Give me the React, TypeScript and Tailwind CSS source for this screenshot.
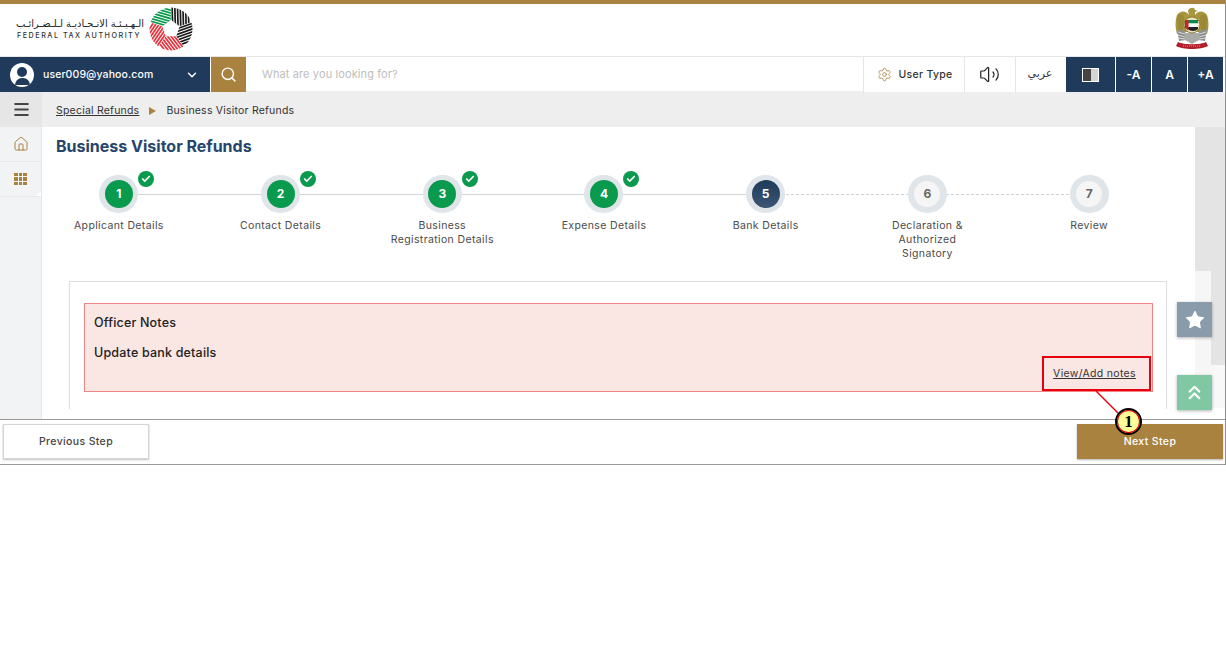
import { ChevronDown, ChevronsUp, Home, Menu, Search, Settings, Star, Volume2, Check } from "lucide-react";

const steps = [
  { n: 1, label: ["Applicant Details"], state: "done" },
  { n: 2, label: ["Contact Details"], state: "done" },
  { n: 3, label: ["Business", "Registration Details"], state: "done" },
  { n: 4, label: ["Expense Details"], state: "done" },
  { n: 5, label: ["Bank Details"], state: "current" },
  { n: 6, label: ["Declaration &", "Authorized", "Signatory"], state: "todo" },
  { n: 7, label: ["Review"], state: "todo" },
];

const wedges = [
  { rot: -36, color: "#0a9a4e" },
  { rot: 36, color: "#1c1c1c" },
  { rot: 108, color: "#1c1c1c" },
  { rot: 180, color: "#e8303a" },
  { rot: 252, color: "#e8303a" },
];

const stripes = [-16, -12.6, -9.2, -5.8, -2.4, 1, 4.4, 7.8, 11.2, 14.6];

function FtaLogo() {
  return (
    <svg width="44" height="44" viewBox="-22 -22 44 44">
      <defs>
        <mask id="ring">
          <circle r="21.5" fill="white" />
          <polygon points="0,-9 8.6,-2.8 5.3,7.3 -5.3,7.3 -8.6,-2.8" fill="black" />
        </mask>
        <clipPath id="wedge">
          <polygon points="0,0 -18,-25 18,-25" />
        </clipPath>
      </defs>
      <g mask="url(#ring)">
        {wedges.map((w) => (
          <g key={w.rot} transform={`rotate(${w.rot})`}>
            <g clipPath="url(#wedge)">
              {stripes.map((s) => (
                <path key={s} d={`M${s - 12} -26 L${s + 8} 0`} stroke={w.color} strokeWidth="1.7" />
              ))}
            </g>
          </g>
        ))}
      </g>
    </svg>
  );
}

function Emblem() {
  return (
    <svg width="34" height="43" viewBox="0 0 34 43" className="mb-[3px]">
      <path d="M13 4 C14 0 20 0 20 3 L23 4 L20 5 L20 8 C24 3 29 4 32 8 C34 14 34 20 32 27 L24 25 L10 25 L2 27 C0 20 0 14 2 8 C5 4 10 3 14 8 Z" fill="#a8963f" />
      <path d="M2 10 C4 7 7 7 9 9 L8 22 L3 24 Z M32 10 C30 7 27 7 25 9 L26 22 L31 24 Z" fill="#9a8a34" />
      <path d="M2 22 L10 24 L11 33 L4 34 Z M32 22 L24 24 L23 33 L30 34 Z" fill="#8d918e" />
      <path d="M3 25 L10 27 M3 28 L10 30 M3 31 L10 32 M31 25 L24 27 M31 28 L24 30 M31 31 L24 32" stroke="#e4e4e4" strokeWidth="0.8" />
      <path d="M10 26 L24 26 L24 33 L17 37 L10 33 Z" fill="#a9aba6" />
      <circle cx="17" cy="18" r="8" fill="#e9e2bb" stroke="#7d6d26" strokeWidth="0.8" />
      <path d="M13 13 H23 V16.5 H13 Z" fill="#0a8a4a" />
      <path d="M13 16.5 H23 V20 H13 Z" fill="#ffffff" />
      <path d="M13 20 H23 V22 C21 24.5 15 24.5 13 22 Z" fill="#222222" />
      <path d="M10 13 H13.5 V23.5 L10 21 Z" fill="#c8202c" />
      <path d="M3 35 C8 38 26 38 31 35 L33 39 C26 43 8 43 1 39 Z" fill="#b01f2a" />
      <path d="M8 39 H26" stroke="#e9c9c0" strokeWidth="0.7" strokeDasharray="1 1" />
    </svg>
  );
}

function Step({ n, label, state }: { n: number; label: string[]; state: string }) {
  const inner =
    state === "done"
      ? "bg-[#0a9a4e] text-white w-[28px] h-[28px]"
      : state === "current"
        ? "bg-gradient-to-b from-[#1f3a5a] to-[#3c5674] text-white w-[28px] h-[28px]"
        : "bg-[#f5f5f6] text-[#666666] w-[26px] h-[26px]";
  return (
    <div className="flex flex-col items-center relative z-10">
      <div className="relative">
        <div className="w-[39px] h-[38px] rounded-full bg-[#e0e5ea] flex items-center justify-center">
          <div className={`rounded-full flex items-center justify-center text-[12px] font-bold ${inner}`}>{n}</div>
        </div>
        {state === "done" && (
          <div className="absolute left-[39px] top-[-4px] w-[16px] h-[16px] rounded-full bg-[#0a9a4e] flex items-center justify-center">
            <Check size={10} strokeWidth={4} className="text-white" />
          </div>
        )}
      </div>
      <div className="mt-[6px] text-center text-[10.5px] leading-[14px] tracking-[0.035em] text-[#4a4a4a]">
        {label.map((l) => (
          <div key={l}>{l}</div>
        ))}
      </div>
    </div>
  );
}

export default function App() {
  return (
    <div className="relative w-[1226px] h-[465px] overflow-hidden bg-white flex flex-col border-r border-[#8f8f8f] font-['Inter',sans-serif]">
      <div className="h-[4px] bg-[#aa823f] shrink-0" />

      <header className="h-[52px] shrink-0 flex items-center justify-between pl-[17px] pr-[16px]">
        <div className="flex items-center gap-[5px] mb-[2px]">
          <div className="w-[127px]">
            <div dir="rtl" className="font-['DejaVu_Sans',sans-serif] text-[9.9px] leading-[13px] text-[#222222] whitespace-nowrap">
              الـهـيـئـة الاتـحـاديـة لـلـضـرائـب
            </div>
            <div className="mt-[1px] text-[7.2px] leading-[10px] font-medium tracking-[0.21em] text-[#333333] whitespace-nowrap">FEDERAL TAX AUTHORITY</div>
          </div>
          <FtaLogo />
        </div>
        <Emblem />
      </header>

      <nav className="h-[36px] shrink-0 flex border-t border-[#e6e6e6] pr-[2px]">
        <div className="w-[210px] bg-[#1f3a5a] flex items-center pl-[10px] pr-[11px] text-white">
          <div className="w-[24px] h-[24px] rounded-full bg-white flex flex-col items-center justify-end overflow-hidden">
            <div className="w-[10px] h-[10px] rounded-full bg-[#1f3a5a] mb-[1px]" />
            <div className="w-[15px] h-[7px] rounded-t-full bg-[#1f3a5a] mb-[2px]" />
          </div>
          <span className="ml-[9px] text-[10.5px] tracking-[0.01em] font-medium flex-1">user009@yahoo.com</span>
          <ChevronDown size={14} strokeWidth={2.5} />
        </div>
        <div className="ml-[1px] w-[35px] bg-[#aa823f] flex items-center justify-center text-white">
          <Search size={17} strokeWidth={2} />
        </div>
        <div className="flex-1 flex items-center pl-[16px] text-[11px] tracking-[0.01em] text-[#bdbdbd] border-b border-[#eeeeee]">What are you looking for?</div>
        <div className="w-[101px] border-l border-[#e6e6e6] pl-[2px] flex items-center justify-center gap-[6px] text-[10.5px] tracking-[0.03em] font-medium text-[#333333]">
          <Settings size={15} strokeWidth={1.3} className="text-[#aa823f]" />
          User Type
        </div>
        <div className="w-[51px] border-l border-[#e6e6e6] pr-[2px] flex items-center justify-center text-[#222222]">
          <Volume2 size={21} strokeWidth={1.4} />
        </div>
        <div className="w-[49px] border-l border-[#e6e6e6] flex items-center justify-center font-['DejaVu_Sans',sans-serif] text-[11px] text-[#333333]">عربي</div>
        <div className="w-[49px] ml-[2px] bg-[#1f3a5a] flex items-center justify-center">
          <div className="w-[17px] h-[14px] bg-white p-[1px] flex">
            <div className="w-1/2 bg-[#444444]" />
            <div className="w-1/2 bg-[#d4d4d4]" />
          </div>
        </div>
        {["-A", "A", "+A"].map((t) => (
          <div key={t} className="w-[35px] ml-[1px] bg-[#1f3a5a] flex items-center justify-center text-white text-[12px] font-semibold">
            {t}
          </div>
        ))}
      </nav>

      <div className="h-[35px] shrink-0 flex bg-[#eeeeee]">
        <div className="w-[42px] bg-[#e6e6e6] flex items-center justify-center text-[#444444]">
          <Menu size={19} strokeWidth={2.4} />
        </div>
        <div className="flex items-center pl-[14px] pt-[2px] text-[10.5px] tracking-[0.02em] text-[#333333]">
          <span className="underline">Special Refunds</span>
          <span className="mx-[10px] w-0 h-0 border-y-[4px] border-y-transparent border-l-[7px] border-l-[#aa823f]" />
          <span>Business Visitor Refunds</span>
        </div>
      </div>

      <main className="flex-1 min-h-0 flex">
        <aside className="w-[42px] shrink-0 bg-[#f1f3f5] border-r border-[#e3e5e8]">
          <div className="h-[35px] flex items-center justify-center border-b border-[#e6e8ea]">
            <Home size={16} strokeWidth={1.5} className="text-[#aa823f]" />
          </div>
          <div className="relative h-[35px] flex items-center justify-center border-b border-[#e6e8ea]">
            <div className="grid grid-cols-3 gap-[1px]">
              {Array.from({ length: 9 }).map((_, i) => (
                <div key={i} className="w-[3.5px] h-[3.5px] bg-[#aa823f]" />
              ))}
            </div>
            <div className="absolute right-0 bottom-0 w-0 h-0 border-l-[5px] border-l-transparent border-b-[5px] border-b-white" />
          </div>
        </aside>

        <section className="w-[1153px] shrink-0 pl-[14px] overflow-hidden">
          <h1 className="mt-[10px] text-[16px] leading-[19px] font-bold text-[#26456b]">Business Visitor Refunds</h1>
          <div className="relative -ml-[18px] mt-[19px] w-[1132px] grid grid-cols-7">
            <div className="absolute left-[81px] top-[19px] w-[647px] border-t border-[#d2d5d8]" />
            <div className="absolute left-[728px] top-[19px] w-[323px] border-t border-dashed border-[#cfd2d5]" />
            {steps.map((s) => (
              <Step key={s.n} n={s.n} label={s.label} state={s.state} />
            ))}
          </div>
          <div className="ml-[13px] mt-[20px] w-[1098px] h-[128px] border border-[#dddddd] border-b-0 pt-[21px] pl-[14px]">
            <div className="w-[1069px] h-[89px] bg-[#fae6e2] border border-[#f08585] pl-[9px] pt-[11px] text-[12.5px] tracking-[0.015em] font-medium text-[#222222]">
              <div className="leading-[15px]">Officer Notes</div>
              <div className="mt-[15px] leading-[15px]">Update bank details</div>
            </div>
          </div>
        </section>

        <div className="w-[30px] shrink-0">
          <div className="h-[144px] bg-[#e4e4e4]" />
          <div className="h-[137px] flex">
            <div className="w-[16px] bg-[#f6f6f6]" />
            <div className="flex-1 bg-[#f8f8f8]">
              <div className="h-[94px] bg-[#e4e4e4]" />
            </div>
          </div>
        </div>
      </main>

      <footer className="h-[46px] shrink-0 border-y border-[#999999] flex items-start justify-between pl-[3px] pr-[2px] pt-[4px]">
        <button className="w-[146px] h-[35px] bg-white border border-[#d4d4d4] shadow-[0_1px_2px_rgba(0,0,0,0.25)] text-[10.5px] tracking-[0.035em] font-medium text-[#444444]">Previous Step</button>
        <button className="w-[146px] h-[35px] bg-[#aa823f] shadow-[0_1px_2px_rgba(0,0,0,0.3)] text-[10.5px] tracking-[0.035em] font-medium text-white">Next Step</button>
      </footer>

      <div className="absolute left-[1177px] top-[302px] w-[35px] h-[35px] bg-[#8a9bab] shadow-[0_1px_3px_rgba(0,0,0,0.3)] flex items-center justify-center">
        <Star size={22} fill="white" strokeWidth={0} className="text-white" />
      </div>
      <div className="absolute left-[1177px] top-[375px] w-[35px] h-[35px] bg-[#80c8a4] shadow-[0_1px_3px_rgba(0,0,0,0.3)] flex items-center justify-center">
        <ChevronsUp size={23} strokeWidth={2.2} className="text-white" />
      </div>

      <div className="absolute left-[1042px] top-[356px] w-[109px] h-[35px] border-2 border-[#e8000f] pr-[4px] flex items-center justify-center text-[10.5px] tracking-[0.03em] text-[#333333] underline">
        View/Add notes
      </div>
      <svg className="absolute left-[1090px] top-[385px]" width="40" height="35">
        <path d="M6 6 L28 28" stroke="#e8000f" strokeWidth="1.5" />
      </svg>
      <div className="absolute left-[1115px] top-[408px] w-[27px] h-[27px] rounded-full bg-[#ffff99] border-2 border-black shadow-[inset_0_0_0_1px_#e8000f] flex items-center justify-center font-['Liberation_Serif',serif] font-bold text-[17px] text-black">
        1
      </div>
    </div>
  );
}
